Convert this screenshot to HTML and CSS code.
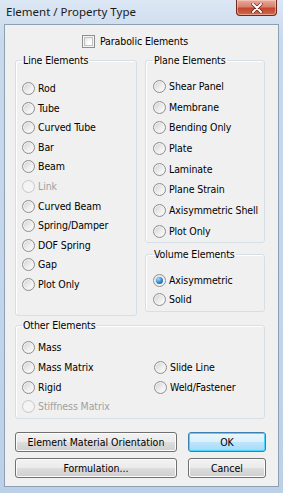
FILE: index.html
```html
<!DOCTYPE html>
<html lang="en">
<head>
    <meta charset="UTF-8">
    <title>Element / Property Type</title>
    <link rel="stylesheet" href="styles.css">
</head>
<body>
    <div class="window">
        <div class="titlebar">
            <span class="title">Element / Property Type</span>
            <span class="close-btn">
                <svg width="14" height="10" viewBox="0 0 14 10">
                    <path d="M3 1 L11 9 M11 1 L3 9" stroke="#5a1a10" stroke-width="3.2" stroke-linecap="round"/>
                    <path d="M3 1 L11 9 M11 1 L3 9" stroke="#fff" stroke-width="2" stroke-linecap="round"/>
                </svg>
            </span>
        </div>

        <div class="client">
            <label class="check-row"><span class="checkbox"></span>Parabolic Elements</label>

            <div class="groups">
                <!-- Line elements -->
                <fieldset class="group line-group">
                    <legend>Line Elements</legend>
                    <label class="opt"><span class="radio"></span>Rod</label>
                    <label class="opt"><span class="radio"></span>Tube</label>
                    <label class="opt"><span class="radio"></span>Curved Tube</label>
                    <label class="opt"><span class="radio"></span>Bar</label>
                    <label class="opt"><span class="radio"></span>Beam</label>
                    <label class="opt disabled"><span class="radio"></span>Link</label>
                    <label class="opt"><span class="radio"></span>Curved Beam</label>
                    <label class="opt"><span class="radio"></span>Spring/Damper</label>
                    <label class="opt"><span class="radio"></span>DOF Spring</label>
                    <label class="opt"><span class="radio"></span>Gap</label>
                    <label class="opt"><span class="radio"></span>Plot Only</label>
                </fieldset>

                <div class="right-col">
                    <fieldset class="group plane-group">
                        <legend>Plane Elements</legend>
                        <label class="opt"><span class="radio"></span>Shear Panel</label>
                        <label class="opt"><span class="radio"></span>Membrane</label>
                        <label class="opt"><span class="radio"></span>Bending Only</label>
                        <label class="opt"><span class="radio"></span>Plate</label>
                        <label class="opt"><span class="radio"></span>Laminate</label>
                        <label class="opt"><span class="radio"></span>Plane Strain</label>
                        <label class="opt"><span class="radio"></span>Axisymmetric Shell</label>
                        <label class="opt"><span class="radio"></span>Plot Only</label>
                    </fieldset>

                    <fieldset class="group volume-group">
                        <legend>Volume Elements</legend>
                        <label class="opt"><span class="radio checked"></span>Axisymmetric</label>
                        <label class="opt"><span class="radio"></span>Solid</label>
                    </fieldset>
                </div>
            </div>

            <fieldset class="group other-group">
                <legend>Other Elements</legend>
                <div class="other-grid">
                    <label class="opt"><span class="radio"></span>Mass</label>
                    <span></span>
                    <label class="opt"><span class="radio"></span>Mass Matrix</label>
                    <label class="opt"><span class="radio"></span>Slide Line</label>
                    <label class="opt"><span class="radio"></span>Rigid</label>
                    <label class="opt"><span class="radio"></span>Weld/Fastener</label>
                    <label class="opt disabled"><span class="radio"></span>Stiffness Matrix</label>
                    <span></span>
                </div>
            </fieldset>

            <div class="buttons">
                <button class="btn">Element Material Orientation</button>
                <button class="btn default">OK</button>
                <button class="btn">Formulation...</button>
                <button class="btn">Cancel</button>
            </div>
        </div>
    </div>
</body>
</html>
```

FILE: styles.css
```css
/* Vista style dialog */
body {
    margin: 0;
    background: #fff;
}
.window {
    width: 283px;
    height: 493px;
    box-sizing: border-box;
    padding: 0 4px 6px 4px;
    display: flex;
    flex-direction: column;
    background: linear-gradient(#dce7f4, #c9d9ec 40px, #c3d5ea 300px, #bcd0e7);
    font-family: "DejaVu Sans Condensed", "DejaVu Sans", sans-serif;
    font-stretch: condensed;
    font-size: 10.5px;
    letter-spacing: -0.1px;
    color: #000;
}
.titlebar {
    height: 24px;
    display: flex;
    justify-content: space-between;
    align-items: flex-start;
}
.title {
    font-family: "Noto Sans", "Open Sans", sans-serif;
    font-stretch: normal;
    font-size: 11.5px;
    letter-spacing: 0;
    line-height: 16px;
    margin: 4px 0 0 2px;
    color: #1a1a1a;
}
.close-btn {
    width: 41px;
    height: 16px;
    margin-right: 2px;
    box-sizing: border-box;
    border: 1px solid #6e2a1f;
    border-top: none;
    border-radius: 0 0 4px 4px;
    background: linear-gradient(#e9a99b, #d7826f 45%, #c4452e 55%, #d06a4b);
    box-shadow: inset 0 0 0 1px rgba(255, 220, 210, 0.5);
    display: flex;
    justify-content: center;
    align-items: center;
}
.client {
    flex: 1;
    border: 1px solid #8d9fb4;
    background: #f0f0f0;
    padding: 10px 13px 0 10px;
    display: flex;
    flex-direction: column;
}
.check-row {
    display: flex;
    align-items: center;
    height: 13px;
    padding-left: 67px;
    line-height: 13px;
}
.checkbox {
    width: 13px;
    height: 13px;
    box-sizing: border-box;
    border: 1px solid #8e8f8f;
    background: #fff;
    box-shadow: inset 0 0 0 1px #f4f4f4, inset 0 0 0 2px #c3c3c3, inset 2px 2px 4px #d4d4d4;
    margin-right: 5px;
}
.groups {
    margin-top: 6px;
    display: grid;
    grid-template-columns: 122px 120px;
    column-gap: 8px;
    align-items: start;
}
.right-col {
    display: flex;
    flex-direction: column;
    gap: 4px;
}
.group {
    margin: 0;
    border: 1px solid #d5dfe5;
    border-radius: 3px;
    box-shadow: inset 1px 1px 0 #fff;
    display: flex;
    flex-direction: column;
    min-width: 0;
}
.group legend {
    padding: 0 1px;
    line-height: 13px;
    color: #000;
}
.opt {
    display: flex;
    align-items: center;
    height: 13px;
    line-height: 13px;
    white-space: nowrap;
}
.opt.disabled {
    color: #a0a0a0;
}
.radio {
    width: 13px;
    height: 13px;
    flex: none;
    box-sizing: border-box;
    border-radius: 50%;
    border: 1px solid #8f8f8f;
    background: linear-gradient(135deg, #cfcfcf, #f0f0f0 60%, #fdfdfd);
    box-shadow: inset 0 0 0 1px #f2f2f2;
    margin-right: 3px;
    display: flex;
    justify-content: center;
    align-items: center;
}
.disabled .radio {
    border-color: #c8c8c8;
    background: #f4f4f4;
}
.radio.checked::after {
    content: "";
    width: 7px;
    height: 7px;
    border-radius: 50%;
    background: radial-gradient(circle at 35% 30%, #9fe0ff, #2f83c8 55%, #15467e);
}
.line-group {
    padding: 15px 6px 24px 6px;
    gap: 6.6px;
}
.plane-group {
    padding: 13px 7px 4px 7px;
    gap: 7.7px;
}
.volume-group {
    margin-top: 1px;
    padding: 13px 7px 5px 7px;
    gap: 6.5px;
}
.other-group {
    margin-top: 3px;
    padding: 9px 6px 5px 6px;
}
.other-grid {
    display: grid;
    grid-template-columns: 132px 1fr;
    row-gap: 6.8px;
}
.buttons {
    margin-top: 13px;
    display: grid;
    grid-template-columns: 162px 78px;
    grid-auto-rows: 20px;
    column-gap: 11px;
    row-gap: 6px;
}
.btn {
    font: inherit;
    color: #000;
    padding: 0;
    border: 1px solid #707070;
    border-radius: 3px;
    background: linear-gradient(#f2f2f2, #ebebeb 50%, #dddddd 50%, #cfcfcf);
    box-shadow: inset 0 0 0 1px #fcfcfc;
}
.btn.default {
    border-color: #3c7fb1;
    background: linear-gradient(#eaf6fd, #d9f0fc 50%, #bee6fd 50%, #a7d9f5);
    box-shadow: inset 0 0 0 1px #48d7fb;
}
```
